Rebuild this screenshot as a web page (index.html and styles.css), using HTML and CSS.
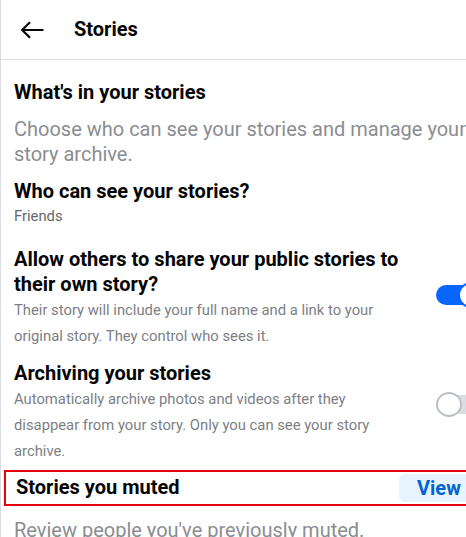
FILE: index.html
```html
<!DOCTYPE html>
<html>
<head>
<meta charset="utf-8">
<link rel="stylesheet" href="styles.css">
</head>
<body>
<div class="page">
  <header class="header">
    <span class="back">
      <svg width="24" height="18" viewBox="0 0 24 18"><path d="M23.5 9H2M10 1.2L2.2 9l7.8 7.8" fill="none" stroke="#050505" stroke-width="2.2"/></svg>
    </span>
    <h1 class="title">Stories</h1>
  </header>
  <main class="content">
    <h2 class="section-title">What's in your stories</h2>
    <p class="intro">Choose who can see your stories and manage your story archive.</p>

    <div class="item">
      <h3 class="item-title">Who can see your stories?</h3>
      <p class="item-sub">Friends</p>
    </div>

    <div class="row share">
      <div class="item-text">
        <h3 class="item-title">Allow others to share your public stories to their own story?</h3>
        <p class="item-desc">Their story will include your full name and a link to your original story. They control who sees it.</p>
      </div>
      <span class="toggle on"><span class="knob"></span></span>
    </div>

    <div class="row archive">
      <div class="item-text">
        <h3 class="item-title">Archiving your stories</h3>
        <p class="item-desc">Automatically archive photos and videos after they disappear from your story. Only you can see your story archive.</p>
      </div>
      <span class="toggle off"><span class="knob"></span></span>
    </div>

    <div class="muted-row">
      <h3 class="item-title">Stories you muted</h3>
      <span class="view-btn">View</span>
    </div>
    <p class="intro review">Review people you've previously muted.</p>
  </main>
</div>
</body>
</html>
```

FILE: styles.css
```css
* { box-sizing: border-box; }
html, body { margin: 0; padding: 0; background: #fff; overflow: hidden; }
body { font-family: Roboto, "Liberation Sans", sans-serif; color: #050505; }
.page {
  width: 520px;
  height: 537px;
  border-left: 1px solid #dadde1;
}
.header {
  height: 60px;
  display: flex;
  align-items: center;
  border-bottom: 1px solid #dadde1;
  padding-left: 19px;
}
.back { width: 24px; height: 18px; display: flex; }
.title { margin: 0 0 0 30px; font-size: 20px; font-weight: 700; line-height: 25px; }
.content { padding: 20px 0 0 13px; }
.section-title { margin: 0; font-size: 20px; font-weight: 700; line-height: 25px; }
.intro { margin: 12px 0 0; font-size: 20px; line-height: 25px; color: #8a8d91; width: 470px; }
.item { margin-top: 12px; }
.item-title { margin: 0; font-size: 20px; font-weight: 700; line-height: 25px; }
.item-sub { margin: 1.5px 0 0; font-size: 14.8px; color: #65676b; line-height: 20px; }
.row { display: flex; align-items: flex-start; }
.share { margin-top: 21.5px; }
.archive { margin-top: 11.5px; }
.item-text { width: 395px; flex: none; }
.item-desc { margin: 0; font-size: 14.8px; line-height: 26px; color: #7d8085; }
.toggle {
  position: relative;
  margin-left: 27px;
  width: 44px;
  height: 20px;
  border-radius: 10px;
  flex: none;
}
.toggle.on { background: #0866ff; margin-top: 37.5px; }
.toggle.off { background: #dadde1; margin-top: 34px; height: 19px; }
.knob {
  position: absolute;
  top: 50%;
  width: 26px;
  height: 26px;
  margin-top: -13px;
  border-radius: 50%;
  background: #fff;
}
.toggle.on .knob { left: 22px; border: 2px solid #0866ff; }
.toggle.off .knob { left: 0; border: 2px solid #bcc0c4; width: 26px; height: 25px; margin-top: -12.5px; }
.muted-row {
  margin: 6px 0 0 -10px;
  height: 36px;
  border: 2px solid #e4000f;
  display: flex;
  align-items: center;
  justify-content: space-between;
  padding-left: 10px;
  width: 480px;
}
.view-btn {
  background: #e7f3ff;
  color: #0064d1;
  font-weight: 700;
  font-size: 20px;
  height: 28px;
  line-height: 28px;
  padding: 0 0 0 18px;
  border-radius: 6px;
  width: 80px;
  margin-right: 3px;
}
.review { margin-top: 12.5px; }
```
